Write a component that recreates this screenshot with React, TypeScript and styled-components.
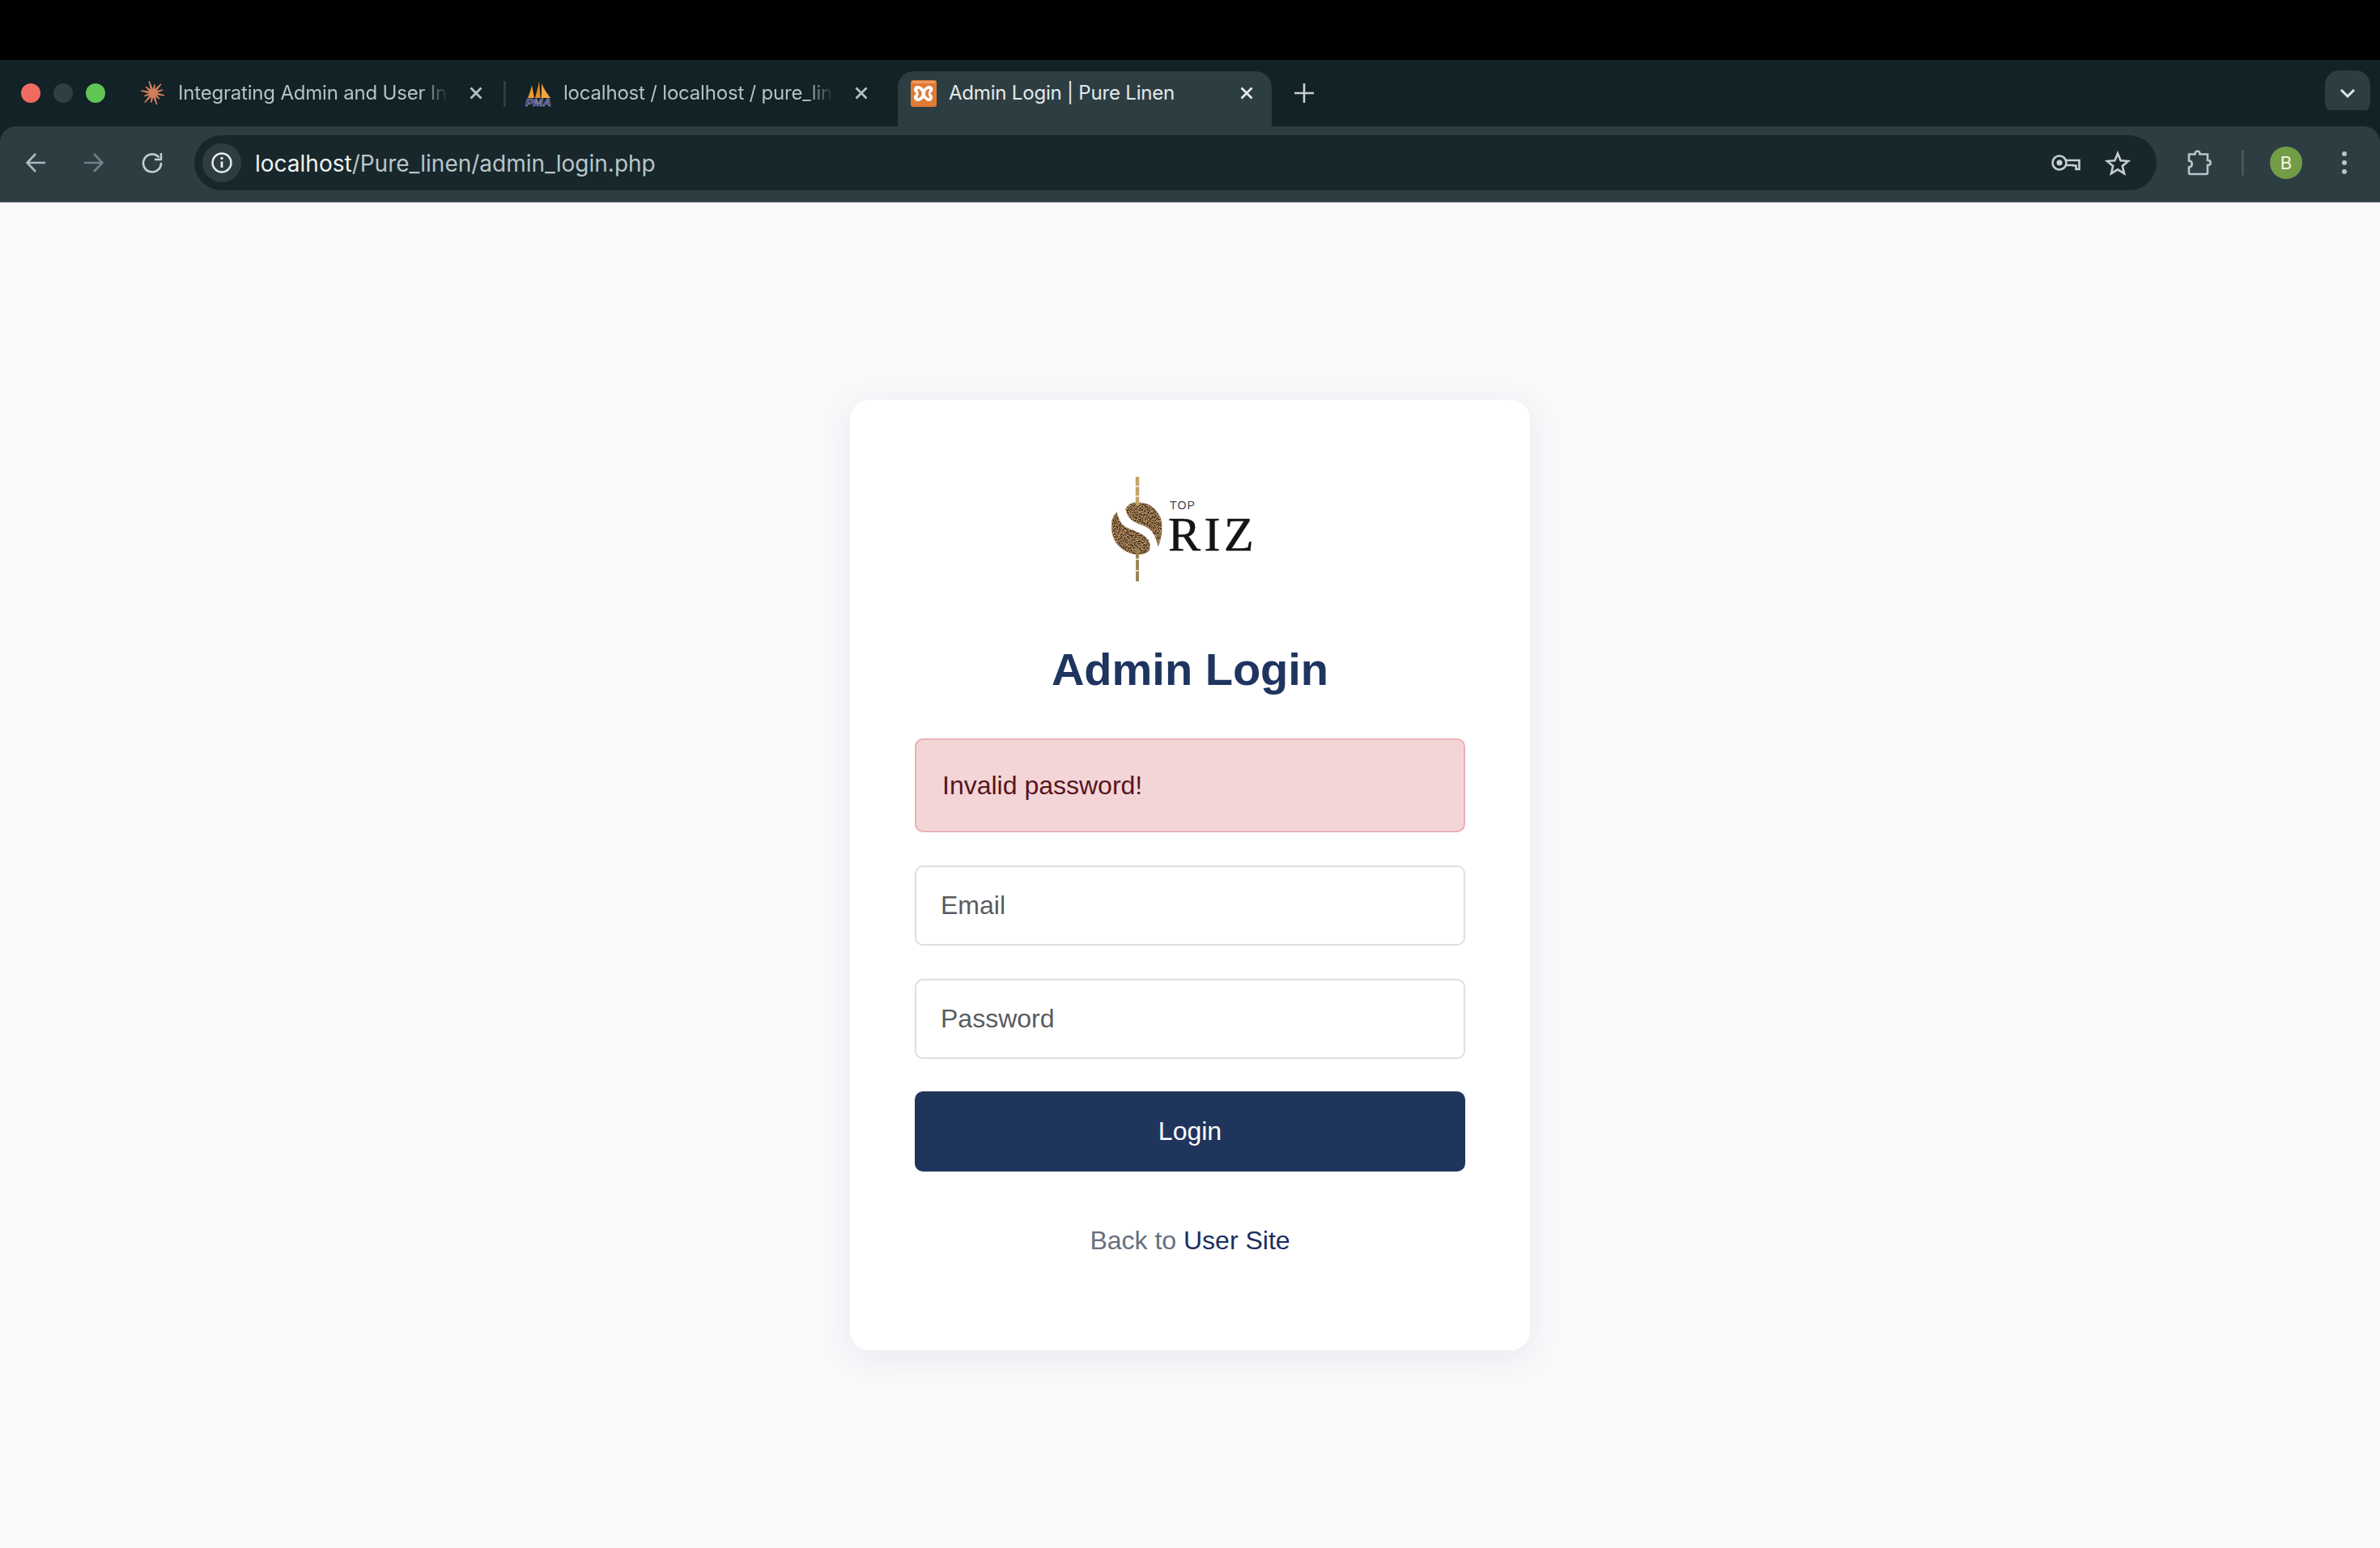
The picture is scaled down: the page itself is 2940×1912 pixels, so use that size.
import React from 'react'
import styled, { createGlobalStyle } from 'styled-components'

const GlobalStyle = createGlobalStyle`
  html, body {
    margin: 0;
    padding: 0;
    background: #f8f9fb;
  }
  * {
    box-sizing: border-box;
  }
`

const Screen = styled.div`
  width: 2940px;
  height: 1912px;
  display: flex;
  flex-direction: column;
  overflow: hidden;
`

const Bezel = styled.div`
  height: 74px;
  flex: none;
  background: #000;
`

const TabStrip = styled.div`
  height: 82px;
  flex: none;
  display: flex;
  align-items: flex-end;
  padding-right: 12px;
  background: #122226;
  font-family: Inter, 'Liberation Sans', sans-serif;
`

const Lights = styled.div`
  width: 157px;
  height: 100%;
  flex: none;
  display: flex;
  align-items: center;
  gap: 16px;
  padding-left: 26px;
`

const Light = styled.span<{ $color: string }>`
  width: 24px;
  height: 24px;
  border-radius: 50%;
  background: ${(props) => props.$color};
`

const Tab = styled.div<{ $active?: boolean }>`
  position: relative;
  width: 462px;
  height: 68px;
  margin-right: 14px;
  flex: none;
  display: flex;
  align-items: center;
  padding: 0 14px 14px 15px;
  border-radius: 20px 20px 0 0;
  color: ${(props) => (props.$active ? '#e3e9ea' : '#b4c2c6')};
  background: ${(props) => (props.$active ? '#2d3e43' : 'transparent')};
`

const TabDivider = styled.span`
  position: absolute;
  top: 12px;
  right: -6px;
  width: 3px;
  height: 32px;
  background: #2d3e43;
`

const FaviconBox = styled.span`
  width: 34px;
  height: 34px;
  flex: none;
  display: flex;
  align-items: center;
  justify-content: center;
`

const TabTitle = styled.span<{ $fade?: boolean }>`
  flex: 1;
  min-width: 0;
  margin-left: 14px;
  font-size: 24px;
  letter-spacing: -0.2px;
  line-height: 34px;
  white-space: nowrap;
  overflow: hidden;
  ${(props) =>
    props.$fade
      ? `mask-image: linear-gradient(to right, #000 88%, transparent 98%);`
      : ''}
`

const TabClose = styled.svg`
  width: 18px;
  height: 18px;
  margin: 0 8px 0 18px;
  flex: none;
  stroke: currentColor;
  stroke-width: 2.8;
  fill: none;
`

const NewTab = styled.svg`
  width: 26px;
  height: 26px;
  margin: 0 0 28px 13px;
  flex: none;
  stroke: #c5d0d3;
  stroke-width: 2.6;
  fill: none;
`

const TabSearch = styled.div`
  width: 56px;
  height: 56px;
  margin: 0 0 13px auto;
  flex: none;
  display: flex;
  align-items: center;
  justify-content: center;
  border-radius: 18px;
  background: #2d3e43;
`

const Toolbar = styled.div`
  height: 94px;
  flex: none;
  display: flex;
  align-items: center;
  padding: 0 0 2px 0;
  background: #2d3e43;
  border-bottom: 2px solid #3b4a4e;
  border-radius: 20px 20px 0 0;
  box-shadow: 0 -20px 0 0 #122226;
  font-family: Inter, 'Liberation Sans', sans-serif;
`

const ToolButton = styled.span<{ $width: number }>`
  width: ${(props) => props.$width}px;
  height: 48px;
  flex: none;
  display: flex;
  align-items: center;
  justify-content: center;
`

const Omnibox = styled.div`
  width: 2424px;
  height: 68px;
  margin-left: 8px;
  flex: none;
  display: flex;
  align-items: center;
  padding: 0 32px 0 10px;
  border-radius: 34px;
  background: #17272b;
`

const SiteInfo = styled.span`
  width: 48px;
  height: 48px;
  flex: none;
  display: flex;
  align-items: center;
  justify-content: center;
  border-radius: 50%;
  background: #2d3e43;
`

const Url = styled.div`
  flex: 1;
  margin-left: 17px;
  padding-top: 1px;
  font-size: 28px;
  color: #b9c5c8;
  white-space: nowrap;
`

const UrlHost = styled.span`
  color: #eef2f3;
`

const OmniIcon = styled.span<{ $gap: number }>`
  height: 48px;
  margin-left: ${(props) => props.$gap}px;
  flex: none;
  display: flex;
  align-items: center;
`

const ToolDivider = styled.span`
  width: 3px;
  height: 32px;
  margin: 0 32px 0 -1px;
  flex: none;
  border-radius: 2px;
  background: #47585c;
`

const Avatar = styled.span`
  width: 40px;
  height: 40px;
  flex: none;
  display: flex;
  align-items: center;
  justify-content: center;
  border-radius: 50%;
  font-size: 22px;
  color: #f2f6ec;
  background: #739c47;
`

const Main = styled.main`
  flex: 1;
  display: flex;
  align-items: center;
  justify-content: center;
  background: #f8f9fb;
  font-family: 'Liberation Sans', Arial, sans-serif;
`

const Card = styled.div`
  width: 840px;
  height: 1174px;
  display: flex;
  flex-direction: column;
  padding: 80px;
  border-radius: 24px;
  background: #fff;
  box-shadow: 0 8px 40px rgba(20, 30, 50, 0.07);
`

const LogoBox = styled.div`
  height: 160px;
  display: flex;
  justify-content: center;
`

const Heading = styled.h2`
  margin: 61px 0 53px;
  font-size: 56px;
  line-height: 64px;
  font-weight: 700;
  text-align: center;
  color: #1f3560;
`

const Alert = styled.div`
  height: 116px;
  margin-bottom: 41px;
  display: flex;
  align-items: center;
  padding: 0 32px;
  border: 2px solid #eab0b5;
  border-radius: 10px;
  font-size: 32px;
  color: #58151c;
  background: #f3d5d8;
`

const Form = styled.form`
  display: flex;
  flex-direction: column;
  gap: 40.5px;
`

const Field = styled.input`
  width: 100%;
  height: 99px;
  padding: 0 30px;
  border: 2px solid #dddfe2;
  border-radius: 10px;
  outline: none;
  font-family: inherit;
  font-size: 32px;
  color: #333;
  background: #fff;

  &::placeholder {
    color: #595c5f;
    opacity: 1;
  }
`

const Submit = styled.button`
  height: 99px;
  padding: 0;
  border: none;
  border-radius: 10px;
  font-family: inherit;
  font-size: 32px;
  color: #fff;
  background: #20355c;
`

const BackRow = styled.p`
  margin: 63px 0 0;
  font-size: 32px;
  line-height: 44px;
  text-align: center;
  color: #667080;
`

const BackLink = styled.a`
  color: #1a2f5f;
  text-decoration: none;
`

// spoke lengths read off the favicon, they are not even
const SPOKES = [14.5, 11, 15, 12, 15.5, 11.5, 15, 12, 15.5, 11, 15, 13]

const ClaudeIcon = () => (
  <svg width="32" height="32" viewBox="0 0 32 32" fill="#d17f5c">
    <circle cx="16" cy="16" r="5" />
    {SPOKES.map((r, i) => {
      const a = (i / SPOKES.length) * Math.PI * 2 + 0.2
      const dx = Math.cos(a)
      const dy = Math.sin(a)
      const pts = [
        [16 - dy * 1.9, 16 + dx * 1.9],
        [16 + dx * r - dy * 0.7, 16 + dy * r + dx * 0.7],
        [16 + dx * r + dy * 0.7, 16 + dy * r - dx * 0.7],
        [16 + dy * 1.9, 16 - dx * 1.9],
      ]
      return <polygon key={i} points={pts.map((p) => p.join(',')).join(' ')} />
    })}
  </svg>
)

const PmaIcon = () => (
  <svg width="34" height="34" viewBox="0 0 34 34">
    <path d="M4 23C6 18 8 12 9 7C10 12 11 18 12 23Z" fill="#f29a2e" />
    <path d="M13 23C15 16 17 8 18 2C18.500 9 19 16 19.500 23Z" fill="#e98a22" />
    <path d="M20.500 23C21 17 21 10 21 5C24 12 28 18 32 23Z" fill="#f4a23c" />
    <text
      x="1"
      y="33"
      textLength="32"
      lengthAdjust="spacingAndGlyphs"
      fontFamily="Liberation Sans"
      fontSize="12.500"
      fontWeight="700"
      fontStyle="italic"
      fill="#2f2f6e"
      stroke="#b9bcdc"
      strokeWidth="0.5"
    >
      PMA
    </text>
  </svg>
)

const XamppIcon = () => (
  <svg width="32" height="33" viewBox="0 0 32 33">
    <rect x="0" y="0" width="32" height="33" rx="3" fill="#e07a35" />
    <rect x="2" y="1.500" width="28" height="2" fill="#f0a878" />
    <path
      d="M8 7C12 7 14 9 16 11C18 9 20 7 23 7C27 7 28 11 27 13C26 15 25 16 24 16.500C25 17 27 19 27 21C27 24 25 26 22 26C20 26 18 24 16 22C14 24 12 26 9 26C6 26 4 24 4 21C4 19 6 17 7 16.500C6 16 4 14 4 12C4 9 6 7 8 7Z"
      fill="#fff"
    />
    <path d="M9 11C11 11 13 13 13.500 15V18C13 20 11 22 9 22C8 22 8 21 9 19.500C10 18 10 15.500 9 13.500C8 12 8 11 9 11Z" fill="#e07a35" />
    <path d="M22.500 11C20.500 11 18.500 13 18 15V18C18.500 20 20.500 22 22.500 22C23.500 22 23.500 21 22.500 19.500C21.500 18 21.500 15.500 22.500 13.500C23.500 12 23.500 11 22.500 11Z" fill="#e07a35" />
  </svg>
)

const BackIcon = ({ color }: { color: string }) => (
  <svg width="28" height="28" viewBox="0 0 28 28" fill="none" stroke={color} strokeWidth="2.6">
    <path d="M26 14H4M14 3L3.500 14L14 25" />
  </svg>
)

const ForwardIcon = ({ color }: { color: string }) => (
  <svg width="28" height="28" viewBox="0 0 28 28" fill="none" stroke={color} strokeWidth="2.6">
    <path d="M2 14H24M14 3L24.500 14L14 25" />
  </svg>
)

const ReloadIcon = () => (
  <svg width="28" height="28" viewBox="0 0 28 28" fill="none" stroke="#c3d0d3" strokeWidth="2.6">
    <path d="M22.500 7.500A11 11 0 1 0 25 14" />
    <path d="M25 2V10H17" strokeWidth="2.4" />
  </svg>
)

const InfoIcon = () => (
  <svg width="28" height="28" viewBox="0 0 28 28" fill="none" stroke="#e6ebec" strokeWidth="2.4">
    <circle cx="14" cy="14" r="11.500" />
    <path d="M14 12.500V20" strokeWidth="2.800" />
    <circle cx="14" cy="8.500" r="1.700" fill="#e6ebec" stroke="none" />
  </svg>
)

const KeyIcon = () => (
  <svg width="36" height="22" viewBox="0 0 36 22" fill="none" stroke="#c6cfd1" strokeWidth="2.6">
    <circle cx="10" cy="11" r="8.500" />
    <circle cx="10" cy="11" r="3.600" fill="#c6cfd1" stroke="none" />
    <path d="M18.500 8H34.500V19H30.500V14.500H27V14H18.500" />
  </svg>
)

const StarIcon = () => (
  <svg width="32" height="31" viewBox="0 0 32 31" fill="none" stroke="#c6cfd1" strokeWidth="2.6">
    <path d="M16 3.500L19.600 12.300L29 13L21.800 19.100L24 28.300L16 23.300L8 28.300L10.200 19.100L3 13L12.400 12.300Z" />
  </svg>
)

const PuzzleIcon = () => (
  <svg width="32" height="32" viewBox="0 0 32 32" fill="none" stroke="#b4c6cb" strokeWidth="2.600">
    <path d="M3 5.500H10.500C10.500 0.500 16.500 0.500 16.500 5.500H26V13C31 13 31 19 26 19V28.500C26 29.500 25.500 30 24.500 30H4.500C3.500 30 3 29.500 3 28.500V21.500C8 21 8 14 3 13.500Z" />
  </svg>
)

const ChevronIcon = () => (
  <svg width="20" height="14" viewBox="0 0 20 14" fill="none" stroke="#e3e9ea" strokeWidth="3">
    <path d="M2 3L10 11L18 3" />
  </svg>
)

const MenuIcon = () => (
  <svg width="8" height="30" viewBox="0 0 8 30" fill="#b4c6cb">
    <circle cx="4" cy="4" r="3" />
    <circle cx="4" cy="15" r="3" />
    <circle cx="4" cy="26" r="3" />
  </svg>
)

const CloseGlyph = () => (
  <TabClose viewBox="0 0 18 18">
    <path d="M2.500 2.500L15.500 15.500M15.500 2.500L2.500 15.500" />
  </TabClose>
)

// brand mark, coordinates taken off the reference crop
const Logo = () => (
  <svg width="200" height="160" viewBox="70 14 200 160">
    <defs>
      <filter id="grain" x="0" y="0" width="100%" height="100%">
        <feTurbulence type="fractalNoise" baseFrequency="0.7" numOctaves="2" seed="7" />
        <feColorMatrix values="0 0 0 0 0.74  0 0 0 0 0.52  0 0 0 0 0.26  2.4 0 0 0 -0.95" />
        <feComposite in2="SourceGraphic" operator="in" />
        <feMerge>
          <feMergeNode in="SourceGraphic" />
          <feMergeNode />
        </feMerge>
      </filter>
    </defs>
    <g filter="url(#grain)" fill="#482610" stroke="#6a4a25" strokeWidth="0.6">
      <path d="M90.700 68.300C94 63 98 61 103.300 61C110 60.500 117 62 121.700 65C130 71 135 80 135 88.300C135.500 97 134 106 130.700 114.300C129 107 127 101 123.300 96.700C119 91 113 89 106.700 86.700C100 84 93 81 90.700 68.300Z" />
      <path d="M79.300 72.700C75 78 73 83 73.300 88.300C73 97 75 105 80 111.700C86 119 94 123 101.700 124.300C109 125 116 124 119.300 120C121 115 120 110 118.300 106.700C115 103 111 100 106.700 98.300C100 95 93 93 88.300 90C84 86 81 80 79.300 72.700Z" />
    </g>
    <path d="M105 29V65" stroke="#c2a468" strokeWidth="4.500" strokeDasharray="11 1.200" />
    <path d="M105 117V158" stroke="#9a8050" strokeWidth="3.800" strokeDasharray="13 1.200" />
    <text x="145" y="69" fontFamily="Liberation Sans" fontSize="14" letterSpacing="1.200" fill="#3b4658">
      TOP
    </text>
    <text x="143" y="120" fontFamily="Liberation Serif" fontSize="60" letterSpacing="4.500" fill="#141414" stroke="#141414" strokeWidth="0.5">
      RIZ
    </text>
  </svg>
)

const App = () => {
  return (
    <>
      <GlobalStyle />
      <Screen>
        <Bezel />
        <TabStrip>
          <Lights>
            <Light $color="#ef6b60" />
            <Light $color="#2f4045" />
            <Light $color="#5fc653" />
          </Lights>
          <Tab>
            <FaviconBox>
              <ClaudeIcon />
            </FaviconBox>
            <TabTitle $fade>Integrating Admin and User Interfaces</TabTitle>
            <CloseGlyph />
            <TabDivider />
          </Tab>
          <Tab>
            <FaviconBox>
              <PmaIcon />
            </FaviconBox>
            <TabTitle $fade>localhost / localhost / pure_linen</TabTitle>
            <CloseGlyph />
          </Tab>
          <Tab $active>
            <FaviconBox>
              <XamppIcon />
            </FaviconBox>
            <TabTitle>Admin Login | Pure Linen</TabTitle>
            <CloseGlyph />
          </Tab>
          <NewTab viewBox="0 0 26 26">
            <path d="M13 1V25M1 13H25" />
          </NewTab>
          <TabSearch>
            <ChevronIcon />
          </TabSearch>
        </TabStrip>
        <Toolbar>
          <ToolButton $width={88}>
            <BackIcon color="#a9bcc1" />
          </ToolButton>
          <ToolButton $width={56}>
            <ForwardIcon color="#6d8187" />
          </ToolButton>
          <ToolButton $width={88}>
            <ReloadIcon />
          </ToolButton>
          <Omnibox>
            <SiteInfo>
              <InfoIcon />
            </SiteInfo>
            <Url>
              <UrlHost>localhost</UrlHost>/Pure_linen/admin_login.php
            </Url>
            <OmniIcon $gap={0}>
              <KeyIcon />
            </OmniIcon>
            <OmniIcon $gap={30}>
              <StarIcon />
            </OmniIcon>
          </Omnibox>
          <ToolButton $width={106}>
            <PuzzleIcon />
          </ToolButton>
          <ToolDivider />
          <Avatar>B</Avatar>
          <ToolButton $width={104}>
            <MenuIcon />
          </ToolButton>
        </Toolbar>
        <Main>
          <Card>
            <LogoBox>
              <Logo />
            </LogoBox>
            <Heading>Admin Login</Heading>
            <Alert>Invalid password!</Alert>
            <Form onSubmit={(e) => e.preventDefault()}>
              <Field type="email" placeholder="Email" />
              <Field type="password" placeholder="Password" />
              <Submit type="submit">Login</Submit>
            </Form>
            <BackRow>
              Back to <BackLink href="#">User Site</BackLink>
            </BackRow>
          </Card>
        </Main>
      </Screen>
    </>
  )
}

export default App
